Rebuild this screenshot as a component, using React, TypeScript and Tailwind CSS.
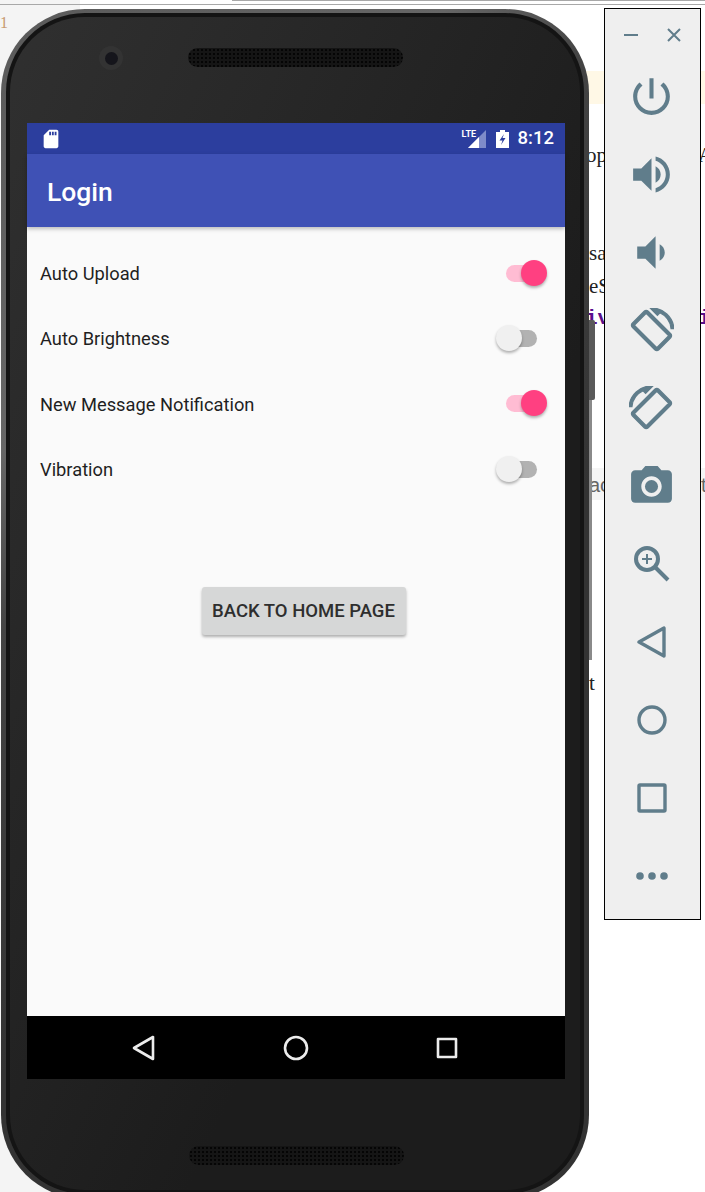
import React from 'react';

const rows = [
  { label: 'Auto Upload', on: true },
  { label: 'Auto Brightness', on: false },
  { label: 'New Message Notification', on: true },
  { label: 'Vibration', on: false },
];

const Toggle = ({ on }: { on: boolean }) =>
  on ? (
    <div className="relative mb-[2px] h-[26px] w-[41px]">
      <div className="absolute left-0 top-[5px] h-[17px] w-[36px] rounded-full bg-[#ffbcd3]" />
      <div className="absolute right-0 top-0 h-[26px] w-[26px] rounded-full bg-[#ff4081] shadow-[0_2px_3px_rgba(0,0,0,0.3)]" />
    </div>
  ) : (
    <div className="relative mb-[2px] mr-[10px] h-[26px] w-[41px]">
      <div className="absolute right-0 top-[5px] h-[17px] w-[36px] rounded-full bg-[#b2b2b2]" />
      <div className="absolute left-0 top-0 h-[26px] w-[26px] rounded-full bg-[#f0f0f0] shadow-[0_2px_3px_rgba(0,0,0,0.3)]" />
    </div>
  );

const Speaker = ({ className }: { className: string }) => (
  <div
    className={`absolute h-[19px] w-[215px] rounded-full bg-[#151515] bg-[radial-gradient(circle,#050505_1px,transparent_1.2px)] bg-[size:4px_4px] ${className}`}
  />
);

const Icon = ({ d, size = 49, thick = false }: { d: string; size?: number; thick?: boolean }) => (
  <svg width={size} height={size} viewBox="0 0 24 24" fill="#607d8b" stroke={thick ? '#607d8b' : 'none'} strokeWidth={thick ? 0.7 : 0}>
    <path d={d} />
  </svg>
);

const rotate =
  'M16.48 2.52c3.27 1.55 5.61 4.72 5.97 8.48h1.5C23.44 4.84 18.29 0 12 0l-.66.03 3.81 3.81 1.33-1.32zm-6.25-.77c-.59-.59-1.54-.59-2.12 0L1.75 8.11c-.59.59-.59 1.54 0 2.12l12.02 12.02c.59.59 1.54.59 2.12 0l6.36-6.36c.59-.59.59-1.54 0-2.12L10.23 1.75zm4.6 19.44L2.81 9.17l6.36-6.36 12.02 12.02-6.36 6.36z';

const Slot = ({ children }: { children: React.ReactNode }) => (
  <div className="flex h-[78px] items-center justify-center">{children}</div>
);

const EmulatorBar = () => (
  <div className="absolute left-[604px] top-[8px] flex h-[912px] w-[97px] flex-col border border-black bg-[#efefef]">
    <div className="flex h-[48px] items-center justify-between pl-[19px] pr-[19px] pt-[4px]">
      <svg width="14" height="14" viewBox="0 0 14 14" stroke="#607d8b" strokeWidth="2">
        <path d="M0 7h14" />
      </svg>
      <svg width="14" height="14" viewBox="0 0 14 14" stroke="#607d8b" strokeWidth="2">
        <path d="M1 1l12 12M13 1L1 13" />
      </svg>
    </div>
    <div className="flex -translate-x-px flex-col">
      <Slot>
        <Icon d="M13 3h-2v10h2V3zm4.83 2.17l-1.42 1.42C17.99 7.86 19 9.81 19 12c0 3.87-3.13 7-7 7s-7-3.13-7-7c0-2.19 1.01-4.14 2.58-5.42L6.17 5.17C4.23 6.82 3 9.26 3 12c0 4.97 4.03 9 9 9s9-4.03 9-9c0-2.74-1.23-5.18-3.17-6.83z" />
      </Slot>
      <Slot>
        <Icon d="M3 9v6h4l5 5V4L7 9H3zm13.5 3c0-1.77-1.02-3.29-2.5-4.03v8.05c1.48-.73 2.5-2.25 2.5-4.02zM14 3.23v2.06c2.89.86 5 3.54 5 6.71s-2.11 5.85-5 6.71v2.06c4.01-.91 7-4.49 7-8.77s-2.99-7.86-7-8.77z" />
      </Slot>
      <Slot>
        <Icon d="M18.5 12c0-1.77-1.02-3.29-2.5-4.03v8.05c1.48-.73 2.5-2.25 2.5-4.02zM5 9v6h4l5 5V4L9 9H5z" />
      </Slot>
      <Slot>
        <Icon d={rotate} size={45} thick />
      </Slot>
      <Slot>
        <div className="-scale-x-100">
          <Icon d={rotate} size={45} thick />
        </div>
      </Slot>
      <Slot>
        <svg width="49" height="49" viewBox="0 0 24 24" fill="#607d8b">
          <circle cx="12" cy="12" r="3.2" />
          <path d="M9 2L7.17 4H4c-1.1 0-2 .9-2 2v12c0 1.1.9 2 2 2h16c1.1 0 2-.9 2-2V6c0-1.1-.9-2-2-2h-3.17L15 2H9zm3 15c-2.76 0-5-2.24-5-5s2.24-5 5-5 5 2.24 5 5-2.24 5-5 5z" />
        </svg>
      </Slot>
      <Slot>
        <svg width="40" height="40" viewBox="0 0 40 40" fill="none" stroke="#607d8b">
          <circle cx="15" cy="15" r="11" strokeWidth="4" />
          <path d="M23 23l13 13" strokeWidth="4" />
          <path d="M15 10v10M10 15h10" strokeWidth="2" />
        </svg>
      </Slot>
      <Slot>
        <svg width="30" height="32" viewBox="0 0 30 32" fill="none" stroke="#607d8b" strokeWidth="3.4" strokeLinejoin="round">
          <path d="M27 2v28L2 16z" />
        </svg>
      </Slot>
      <Slot>
        <svg width="30" height="30" viewBox="0 0 30 30" fill="none" stroke="#607d8b" strokeWidth="3.4">
          <circle cx="15" cy="15" r="13" />
        </svg>
      </Slot>
      <Slot>
        <svg width="30" height="30" viewBox="0 0 30 30" fill="none" stroke="#607d8b" strokeWidth="3.4" strokeLinejoin="round">
          <rect x="2" y="2" width="26" height="26" rx="1" />
        </svg>
      </Slot>
      <Slot>
        <svg width="34" height="10" viewBox="0 0 34 10" fill="#607d8b">
          <circle cx="5" cy="5" r="3.8" />
          <circle cx="17" cy="5" r="3.8" />
          <circle cx="29" cy="5" r="3.8" />
        </svg>
      </Slot>
    </div>
  </div>
);

const Backdrop = () => (
  <>
    <div className="absolute left-[84px] right-0 top-[4px] h-px bg-[#a8a8a8]" />
    <div className="absolute left-[232px] right-0 top-0 h-px bg-[#a8a8a8]" />
    <div className="absolute left-0 top-0 h-[1192px] w-[80px] bg-[#f4f4f4]" />
    <div className="absolute left-0 top-[4px] h-px w-[84px] bg-[#a8a8a8]" />
    <div className="absolute left-[580px] right-0 top-[71px] h-[33px] bg-[#fff8e6]" />
    <div className="absolute left-[585px] top-[468px] h-[32px] w-[120px] bg-[#f5f5f5]" />
    <span className="absolute left-[586px] top-[142px] font-['Liberation_Serif',serif] text-[21px] leading-[26px] text-[#222]">op</span>
    <span className="absolute left-[698px] top-[142px] font-['Liberation_Serif',serif] text-[21px] leading-[26px] text-[#222]">A</span>
    <span className="absolute left-[589px] top-[240px] font-['Liberation_Serif',serif] text-[21px] leading-[26px] text-[#222]">sa</span>
    <span className="absolute left-[589px] top-[273px] font-['Liberation_Serif',serif] text-[21px] leading-[26px] text-[#222]">eS</span>
    <span className="absolute left-[585px] top-[306px] font-['Liberation_Mono',monospace] text-[21px] font-bold leading-[26px] text-[#5b0f8b]">iv</span>
    <span className="absolute left-[698px] top-[306px] font-['Liberation_Mono',monospace] text-[21px] font-bold leading-[26px] text-[#5b0f8b]">i</span>
    <span className="absolute left-[589px] top-[472px] font-['Liberation_Sans',sans-serif] text-[20px] leading-[26px] text-[#666]">ac</span>
    <span className="absolute left-[701px] top-[472px] font-['Liberation_Sans',sans-serif] text-[20px] leading-[26px] text-[#666]">t</span>
    <span className="absolute left-[589px] top-[670px] font-['Liberation_Serif',serif] text-[21px] leading-[26px] text-[#222]">t</span>
    <span className="absolute left-[0px] top-[13px] font-['Liberation_Serif',serif] text-[16px] leading-[20px] text-[#c89a70]">1</span>
  </>
);

const Phone = () => (
  <div className="absolute left-[1px] top-[9px] h-[1190px] w-[588px] rounded-[84px] bg-[linear-gradient(135deg,#5a5a5a,#666_25%,#444_35%,#333_60%)] p-[5px] pt-[4px]">
    <div className="h-full w-full rounded-[79px] bg-[#141414] p-[4px]">
      <div className="relative flex h-full w-full flex-col items-stretch rounded-[75px] bg-[linear-gradient(115deg,#303030,#1c1c1c_65%)] pl-[17px] pr-[15px] pt-[106px]">
        <div className="absolute left-[89px] top-[29px] flex h-[24px] w-[24px] items-center justify-center rounded-full bg-[#333]">
          <div className="h-[13px] w-[13px] rounded-full bg-[#15151b]" />
        </div>
        <Speaker className="left-[178px] top-[31px]" />

        <div className="flex h-[956px] w-[538px] flex-col font-['Roboto',sans-serif]">
          <div className="flex h-[31px] items-center justify-between bg-[#2c3e9e] pl-[13px] pr-[11px] text-white">
            <svg width="22" height="22" viewBox="0 0 24 24" fill="#fff">
              <path d="M18 2h-8L4.02 8 4 20c0 1.1.9 2 2 2h12c1.1 0 2-.9 2-2V4c0-1.1-.9-2-2-2zm-6 6h-2V4h2v4zm3 0h-2V4h2v4zm3 0h-2V4h2v4z" />
            </svg>
            <div className="flex items-center">
              <div className="relative h-[18px] w-[24px]">
                <svg width="18" height="18" viewBox="0 0 18 18" className="absolute right-0 top-0">
                  <path d="M18 0v18H0z" fill="#7f8bc9" />
                  <path d="M11 7v11H0z" fill="#fff" />
                </svg>
                <span className="absolute left-0 top-0 text-[9px] font-bold leading-[9px]">LTE</span>
              </div>
              <svg width="13" height="18" viewBox="0 0 13 18" className="ml-[10px]">
                <path d="M0 2h4V0h5v2h4v16H0z" fill="#fff" />
                <path d="M8 4L3.5 10.5h3L5 15l4.5-7h-3z" fill="#2c3e9e" />
              </svg>
              <span className="ml-[9px] text-[18.5px] font-medium leading-none">8:12</span>
            </div>
          </div>
          <div className="z-10 flex h-[73px] items-center bg-[#3f51b5] pl-[20px] pt-[3px] text-[26.5px] font-medium text-white shadow-[0_2px_4px_rgba(0,0,0,0.25)]">
            Login
          </div>
          <div className="flex h-[789px] flex-col bg-[#fafafa]">
            <div className="flex flex-col pl-[13px] pr-[18px] pt-[14px]">
              {rows.map((row) => (
                <div key={row.label} className="flex h-[65.3px] items-center justify-between text-[18.3px] text-[#1f1f1f]">
                  <span>{row.label}</span>
                  <Toggle on={row.on} />
                </div>
              ))}
            </div>
            <div className="flex justify-center pl-[15px] pt-[85px]">
              <button className="h-[48px] w-[204px] rounded-[3px] bg-[#d6d7d7] pt-[2px] text-[18.5px] font-medium text-[#2e2e2e] shadow-[0_2px_3px_rgba(0,0,0,0.3)]">
                BACK TO HOME PAGE
              </button>
            </div>
          </div>
          <div className="flex h-[63px] items-center justify-between bg-black pl-[105px] pr-[107px]">
            <svg width="24" height="26" viewBox="0 0 24 26" fill="none" stroke="#ececec" strokeWidth="2.6" strokeLinejoin="round">
              <path d="M21 2v22L2 13z" />
            </svg>
            <svg width="26" height="26" viewBox="0 0 26 26" fill="none" stroke="#ececec" strokeWidth="2.6">
              <circle cx="13" cy="13" r="11" />
            </svg>
            <svg width="22" height="22" viewBox="0 0 22 22" fill="none" stroke="#ececec" strokeWidth="2.6" strokeLinejoin="round">
              <rect x="2" y="2" width="18" height="18" />
            </svg>
          </div>
        </div>
        <Speaker className="left-[179px] top-[1129px]" />
      </div>
    </div>
  </div>
);

export default function App() {
  return (
    <div className="relative h-[1192px] w-[705px] overflow-hidden bg-white">
      <Backdrop />
      <div className="absolute left-[589px] top-[320px] h-[80px] w-[6px] rounded-r-[2px] bg-[#5a5a5a]" />
      <div className="absolute left-[589px] top-[400px] h-[260px] w-[3px] bg-[#8a8a8a]" />
      <Phone />
      <EmulatorBar />
    </div>
  );
}
